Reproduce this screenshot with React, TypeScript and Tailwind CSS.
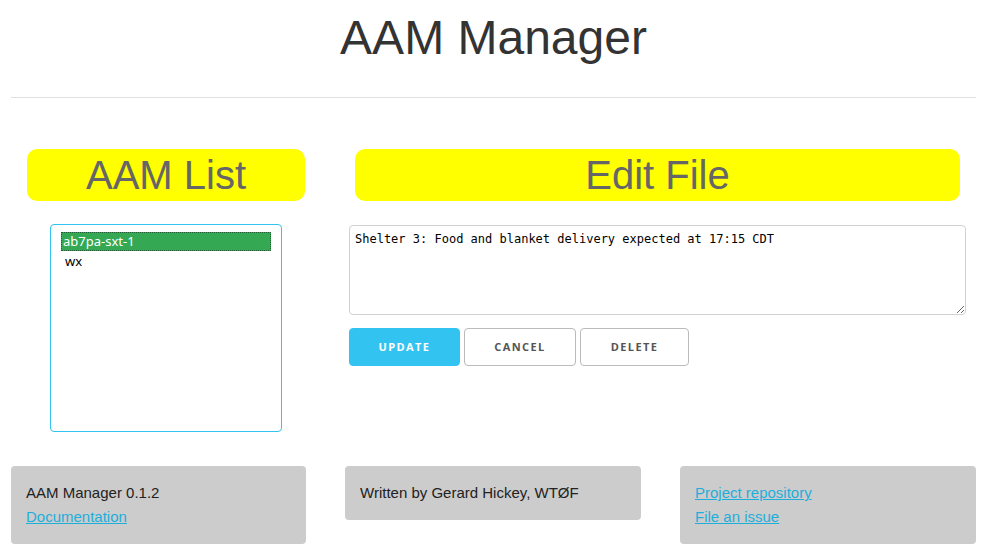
export default function App() {
  const items = ["ab7pa-sxt-1", "wx"];

  return (
    <div className="min-h-[556px] bg-white pl-[11px] pr-[12px] font-['Liberation_Sans',Arial,sans-serif] text-[#222]">
      <header className="pt-[10px]">
        <h1 className="text-center text-[48px] leading-[55px] text-[#333]">AAM Manager</h1>
        <hr className="mt-[32px] border-t border-[#e1e1e1]" />
      </header>

      <main className="mt-[51px] flex">
        <section className="ml-[16px] w-[278px] shrink-0">
          <div className="flex h-[52px] items-center justify-center rounded-[10px] bg-[#ffff00] text-[40px] text-[#666]">
            AAM List
          </div>
          <div className="mx-auto mt-[23px] h-[208px] w-[232px] rounded-[4px] border border-[#33C3F0] px-[10px] pt-[7px] font-['Noto_Sans','Open_Sans',sans-serif] text-[13px]">
            {items.map((item, i) => (
              <div
                key={item}
                className={
                  i === 0
                    ? "h-[19px] bg-[#34a853] pl-[2px] leading-[19px] text-white outline-1 outline-dotted outline-[#1f5f33] -outline-offset-1"
                    : "h-[22px] pl-[4px] leading-[20px] text-black"
                }
              >
                {item}
              </div>
            ))}
          </div>
        </section>

        <section className="ml-[44px] w-[617px] shrink-0">
          <div className="mx-[6px] flex h-[52px] items-center justify-center rounded-[10px] bg-[#ffff00] text-[40px] text-[#666]">
            Edit File
          </div>
          <textarea
            className="mt-[24px] block h-[90px] w-full rounded-[4px] border border-[#d1d1d1] px-[5px] py-[5px] font-['DejaVu_Sans_Mono',monospace] text-[12px] leading-[16px] text-black outline-none"
            defaultValue="Shelter 3: Food and blanket delivery expected at 17:15 CDT"
          />
          <div className="mt-[13px] flex gap-[4px] font-['Open_Sans','Noto_Sans',sans-serif] text-[11px] font-bold tracking-[1.4px]">
            <button className="h-[38px] w-[111px] rounded-[4px] border border-[#33C3F0] bg-[#33C3F0] uppercase text-white">
              Update
            </button>
            <button className="h-[38px] w-[112px] rounded-[4px] border border-[#bbb] bg-white uppercase text-[#555]">
              Cancel
            </button>
            <button className="h-[38px] w-[109px] rounded-[4px] border border-[#bbb] bg-white uppercase text-[#555]">
              Delete
            </button>
          </div>
        </section>
      </main>

      <footer className="mt-[34px] flex items-start justify-between text-[15px] leading-[24px]">
        <div className="w-[295px] rounded-[4px] bg-[#cccccc] px-[15px] py-[15px]">
          <div>AAM Manager 0.1.2</div>
          <a href="#" className="text-[#1EAEDB] underline">Documentation</a>
        </div>
        <div className="w-[296px] rounded-[4px] bg-[#cccccc] px-[15px] py-[15px]">
          <div>Written by Gerard Hickey, WTØF</div>
        </div>
        <div className="w-[296px] rounded-[4px] bg-[#cccccc] px-[15px] py-[15px]">
          <div>
            <a href="#" className="text-[#1EAEDB] underline">Project repository</a>
          </div>
          <a href="#" className="text-[#1EAEDB] underline">File an issue</a>
        </div>
      </footer>
    </div>
  );
}
